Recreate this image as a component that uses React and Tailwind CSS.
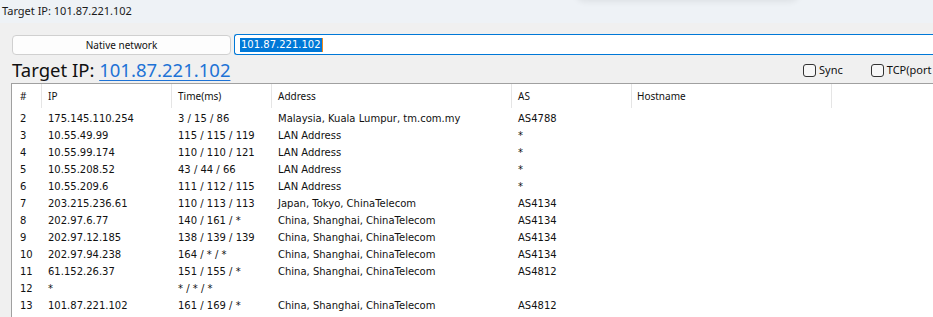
const HOPS = [
  ['2', '175.145.110.254', '3 / 15 / 86', 'Malaysia, Kuala Lumpur, tm.com.my', 'AS4788'],
  ['3', '10.55.49.99', '115 / 115 / 119', 'LAN Address', '*'],
  ['4', '10.55.99.174', '110 / 110 / 121', 'LAN Address', '*'],
  ['5', '10.55.208.52', '43 / 44 / 66', 'LAN Address', '*'],
  ['6', '10.55.209.6', '111 / 112 / 115', 'LAN Address', '*'],
  ['7', '203.215.236.61', '110 / 113 / 113', 'Japan, Tokyo, ChinaTelecom', 'AS4134'],
  ['8', '202.97.6.77', '140 / 161 / *', 'China, Shanghai, ChinaTelecom', 'AS4134'],
  ['9', '202.97.12.185', '138 / 139 / 139', 'China, Shanghai, ChinaTelecom', 'AS4134'],
  ['10', '202.97.94.238', '164 / * / *', 'China, Shanghai, ChinaTelecom', 'AS4134'],
  ['11', '61.152.26.37', '151 / 155 / *', 'China, Shanghai, ChinaTelecom', 'AS4812'],
  ['12', '*', '* / * / *', '', ''],
  ['13', '101.87.221.102', '161 / 169 / *', 'China, Shanghai, ChinaTelecom', 'AS4812'],
]

// column widths follow the header separators in the screenshot
const COLS = [
  { label: '#', w: 'w-[30px]', pad: 'pl-[8px]' },
  { label: 'IP', w: 'w-[130px]', pad: 'pl-[6px]' },
  { label: 'Time(ms)', w: 'w-[100px]', pad: 'pl-[6px]' },
  { label: 'Address', w: 'w-[240px]', pad: 'pl-[6px]' },
  { label: 'AS', w: 'w-[120px]', pad: 'pl-[6px]' },
  { label: 'Hostname', w: 'w-[200px]', pad: 'pl-[5px]' },
]

function Check({ label }) {
  return (
    <label className="flex items-center gap-[3px] shrink-0">
      <span className="w-[13px] h-[13px] rounded-[3px] border border-[#333] bg-[#f7f7f7]" />
      <span className="text-[11px] text-[#111] whitespace-nowrap">{label}</span>
    </label>
  )
}

export default function App() {
  return (
    <div className="relative w-[933px] h-[317px] overflow-hidden bg-[#f0f0f0] font-['Noto_Sans',sans-serif]">
      {/* title bar */}
      <div className="relative h-[23px] bg-[#eef2f6] pl-[2px] flex items-center text-[11px] text-[#1a1a1a]">
        Target IP: 101.87.221.102
        <div className="absolute left-[575px] top-[-14px] w-[225px] h-[14px] rounded-b-[10px] shadow-[0_2px_6px_rgba(0,0,0,0.07)]" />
      </div>

      {/* search row */}
      <div className="flex items-start mt-[11px] pl-[12px]">
        <button className="mt-[1px] w-[219px] h-[20px] rounded-[4px] border border-[#d0d0d0] bg-[#fdfdfd] text-[10px] text-[#111] leading-none">
          Native network
        </button>
        <div className="ml-[3px] flex-1 h-[21px] rounded-l-[3px] border border-r-0 border-[#0078d7] bg-white flex items-center pl-[5px]">
          <span className="bg-[#0078d7] text-white font-['DejaVu_Sans',sans-serif] text-[10px] leading-[14px] px-[1px]">101.87.221.102</span>
          <span className="w-[1px] h-[14px] bg-[#f08a1c]" />
        </div>
      </div>

      {/* heading row */}
      <div className="flex items-center mt-[2px] h-[26px] pl-[12px]">
        <div className="w-[791px] shrink-0 text-[18.5px] leading-[26px] text-[#111]">
          Target IP: <span className="text-[#1e73d6] underline underline-offset-[3px] decoration-1">101.87.221.102</span>
        </div>
        <div className="flex items-center gap-[28px]">
          <Check label="Sync" />
          <Check label="TCP(port" />
          <span className="w-[4px] h-[12px] bg-[#f5a54a] -ml-[26px] shrink-0" />
        </div>
      </div>

      {/* result table */}
      <div className="ml-[11px] border-t border-l border-[#a0a0a0] bg-white h-[240px]">
        <div className="flex h-[24px] text-[10px] text-[#111]">
          {COLS.map(c => (
            <div key={c.label} className={`${c.w} ${c.pad} border-r border-[#e5e5e5] flex items-center`}>{c.label}</div>
          ))}
        </div>
        <div className="pt-[2px] font-['DejaVu_Sans',sans-serif] text-[10px] text-[#111]">
          {HOPS.map(row => (
            <div key={row[0]} className="flex h-[17px] items-center">
              {row.map((cell, i) => (
                <div key={i} className={`${COLS[i].w} ${COLS[i].pad} whitespace-nowrap`}>{cell}</div>
              ))}
            </div>
          ))}
        </div>
      </div>
    </div>
  )
}
